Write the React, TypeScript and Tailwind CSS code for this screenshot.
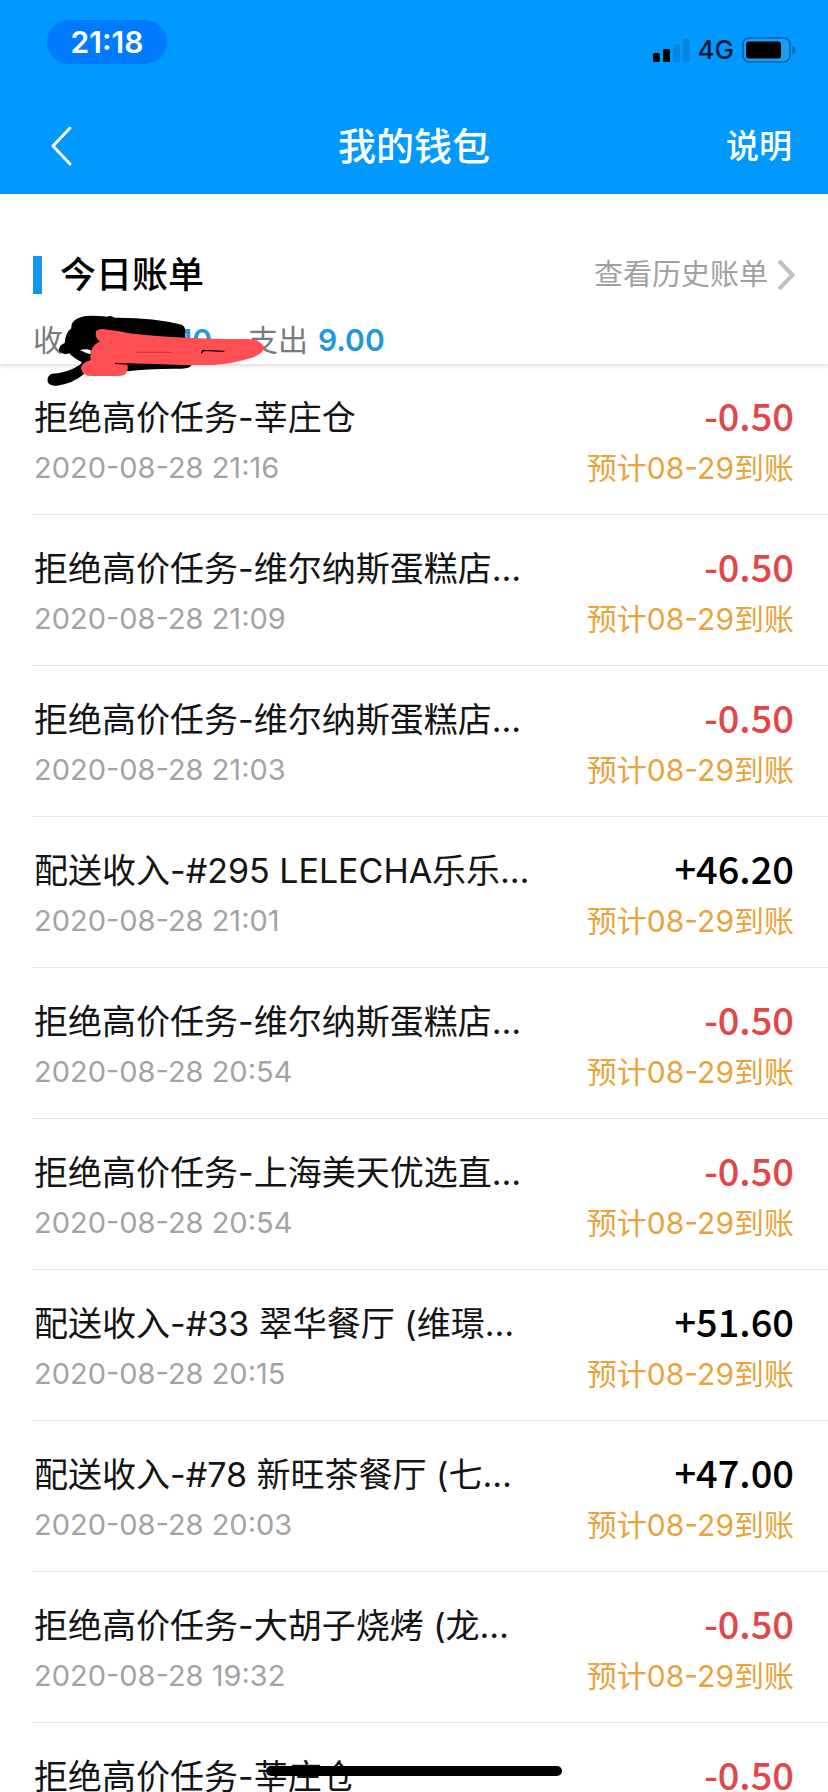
type Entry = {
  title: string;
  time: string;
  amount: string;
};

const entries: Entry[] = [
  { title: "拒绝高价任务-莘庄仓", time: "2020-08-28 21:16", amount: "-0.50" },
  { title: "拒绝高价任务-维尔纳斯蛋糕店…", time: "2020-08-28 21:09", amount: "-0.50" },
  { title: "拒绝高价任务-维尔纳斯蛋糕店…", time: "2020-08-28 21:03", amount: "-0.50" },
  { title: "配送收入-#295 LELECHA乐乐…", time: "2020-08-28 21:01", amount: "+46.20" },
  { title: "拒绝高价任务-维尔纳斯蛋糕店…", time: "2020-08-28 20:54", amount: "-0.50" },
  { title: "拒绝高价任务-上海美天优选直…", time: "2020-08-28 20:54", amount: "-0.50" },
  { title: "配送收入-#33 翠华餐厅 (维璟…", time: "2020-08-28 20:15", amount: "+51.60" },
  { title: "配送收入-#78 新旺茶餐厅 (七…", time: "2020-08-28 20:03", amount: "+47.00" },
  { title: "拒绝高价任务-大胡子烧烤 (龙…", time: "2020-08-28 19:32", amount: "-0.50" },
  { title: "拒绝高价任务-莘庄仓", time: "", amount: "-0.50" },
];

function SignalIcon() {
  return (
    <svg viewBox="0 0 37 23" className="h-[23px] w-[37px]" aria-hidden="true">
      <rect x="0" y="14" width="7" height="9" rx="1.5" fill="#000" />
      <rect x="10" y="10" width="7" height="13" rx="1.5" fill="#000" />
      <rect x="20" y="5.5" width="7" height="17.5" rx="1.5" fill="#0586e0" />
      <rect x="30" y="0" width="7" height="23" rx="1.5" fill="#0586e0" />
    </svg>
  );
}

function BatteryIcon() {
  return (
    <svg viewBox="0 0 54 26" className="h-[26px] w-[54px]" aria-hidden="true">
      <rect x="1" y="1" width="47" height="24" rx="6.5" fill="#1c9cf0" stroke="#0c63ac" strokeWidth="1.6" />
      <rect x="4" y="4.5" width="35" height="17" rx="3" fill="#000" />
      <path d="M50.5 9v8c1.800-.7 2.900-2.200 2.900-4s-1.100-3.300-2.900-4z" fill="#0c63ac" />
    </svg>
  );
}

function Scribble() {
  return (
    <svg
      viewBox="120 240 720 240"
      className="pointer-events-none absolute top-[116px] left-10 h-20 w-60"
      aria-hidden="true"
    >
      <path
        d="M248 260Q262 254 322 260Q332 255 344 263Q460 262 545 284Q556 289 556 304V321L576 402Q572 416 545 416Q440 415 384 424L340 400L270 402L252 432Q220 460 172 467Q150 469 143 456Q140 436 156 431Q200 430 240 404Q250 396 240 394Q218 382 208 370Q190 377 178 364Q174 346 194 339Q196 308 214 295Q212 268 248 260Z"
        fill="#000"
      />
      <path d="M240 361Q254 355 272 361V373Q256 369 240 361Z" fill="#fff" />
      <path
        d="M288 304Q300 293 322 299Q352 301 388 310Q470 320 560 323Q660 328 745 327Q780 328 793 352Q790 370 760 382Q700 402 640 405H548Q460 402 380 400Q388 414 378 430Q374 438 352 438H275Q248 438 243 416Q244 398 272 390Q266 350 300 334Q284 326 288 304Z"
        fill="#ff4f52"
      />
      <path d="M408 367H516" stroke="#a02c2e" strokeWidth="2" fill="none" />
      <path d="M604 370L609 361L673 364" stroke="#000" strokeWidth="4" fill="none" />
      <path d="M345 400L400 403" stroke="#000" strokeWidth="4" fill="none" />
    </svg>
  );
}

function EntryRow({ entry }: { entry: Entry }) {
  const amountColor = entry.amount.startsWith("-") ? "text-[#e04848]" : "text-black";
  return (
    <li className="flex justify-between gap-4 border-b border-[#e4e4e4] pt-[30px] pr-[34px] pb-[26px] pl-0.5">
      <div className="flex min-w-0 flex-col gap-1.5">
        <h2 className="truncate text-[34px] leading-[48px] font-normal text-[#141414]">{entry.title}</h2>
        <time className="text-[29px] leading-10 text-[#a3a3a3]">{entry.time}</time>
      </div>
      <div className="flex shrink-0 flex-col items-end gap-3">
        <strong className={`font-['Noto_Sans_CJK_SC',sans-serif] text-[38px] leading-[42px] font-medium ${amountColor}`}>
          {entry.amount}
        </strong>
        <span className="text-[30px] leading-10 text-[#e8a33c]">预计08-29到账</span>
      </div>
    </li>
  );
}

export default function App() {
  return (
    <div className="flex h-screen flex-col overflow-hidden bg-white font-['Inter','Noto_Sans_CJK_SC',sans-serif]">
      <header className="shrink-0 bg-[#0099ff] text-white">
        <div className="flex h-[98px] items-start justify-between pt-5 pr-8 pl-[47px]">
          <span className="flex h-11 w-[120px] items-center justify-center rounded-full bg-[#007aff] text-[30px] leading-none font-semibold">
            21:18
          </span>
          <div className="flex items-center gap-2 pt-[17px]">
            <SignalIcon />
            <span className="text-[26px] leading-[26px] font-medium text-[#001a33]">4G</span>
            <BatteryIcon />
          </div>
        </div>
        <div className="grid h-24 grid-cols-3 items-center px-9">
          <button type="button" aria-label="返回" className="justify-self-start pl-3">
            <svg viewBox="0 0 26 42" className="h-[42px] w-[26px]" aria-hidden="true">
              <path d="M22 3L5 21l17 18" fill="none" stroke="#fff" strokeWidth="3" strokeLinecap="round" strokeLinejoin="round" />
            </svg>
          </button>
          <h1 className="justify-self-center text-[38px] leading-[54px] font-medium">我的钱包</h1>
          <button type="button" className="justify-self-end text-[33px] leading-[54px] font-medium">
            说明
          </button>
        </div>
      </header>

      <section className="relative z-10 shrink-0 bg-white pt-[54px] pr-8 pb-1 pl-[33px] shadow-[0_2px_4px_rgba(0,0,0,0.14)]">
        <div className="flex items-center justify-between">
          <div className="flex items-center gap-[18px]">
            <span className="h-[38px] w-[9px] bg-[#1296f0]" />
            <h2 className="text-[36px] leading-[54px] font-medium text-black">今日账单</h2>
          </div>
          <a href="#history" className="flex items-center gap-2 text-[29px] leading-[54px] text-[#a0a0a0]">
            查看历史账单
            <svg viewBox="0 0 20 32" className="h-8 w-5" aria-hidden="true">
              <path d="M3 2l13.5 14L3 30" fill="none" stroke="#c0c0c0" strokeWidth="4" />
            </svg>
          </a>
        </div>
        <div className="flex items-center pt-[18px] text-[30px] leading-10 text-[#7a7a7a]">
          <span>收入</span>
          <span className="w-[119px] text-right font-semibold text-[#2196dc]">10</span>
          <span className="ml-9">支出</span>
          <span className="ml-2.5 font-semibold text-[#2196dc]">9.00</span>
        </div>
        <Scribble />
      </section>

      <ul className="min-h-0 flex-1 overflow-hidden pl-8">
        {entries.map((entry, index) => (
          <EntryRow key={index} entry={entry} />
        ))}
      </ul>

      <div className="fixed bottom-4 left-1/2 z-20 h-[10px] w-[296px] -translate-x-1/2 rounded-full bg-black" />
    </div>
  );
}
